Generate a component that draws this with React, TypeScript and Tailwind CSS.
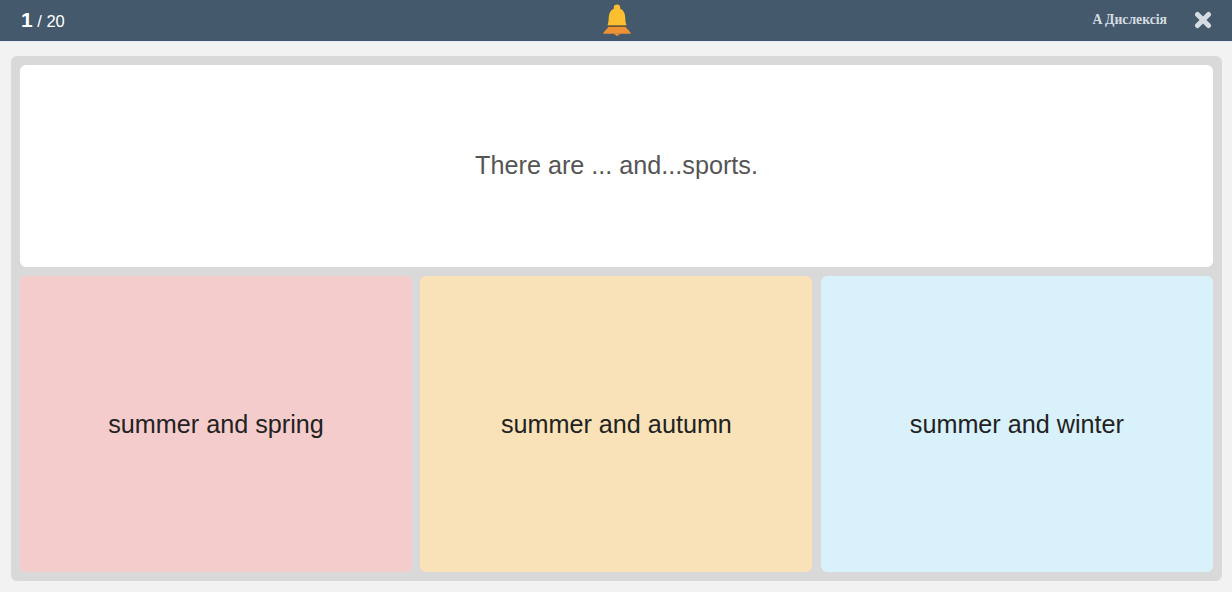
import React from "react";

const answers = [
  { id: 1, text: "summer and spring", color: "bg-[#f5cccc]" },
  { id: 2, text: "summer and autumn", color: "bg-[#f9e2b8]" },
  { id: 3, text: "summer and winter", color: "bg-[#d9f1fb]" },
];

const Bell = () => (
  <svg width="28" height="34" viewBox="0 0 28 34" className="block">
    {/* bell body */}
    <path
      d="M14 1.500c-2 0-3.200 1.200-3.200 2.800v1.400C7.500 7.200 6 10 5.800 14c-.1 3.500-.5 6-1.300 8.500h19c-.8-2.500-1.200-5-1.300-8.500-.2-4-1.700-6.800-5-8.300V4.300c0-1.600-1.200-2.800-3.200-2.800z"
      fill="#fbbf2f"
    />
    <rect x="5" y="22.500" width="18" height="1.500" fill="#6f5a2a" />
    {/* base */}
    <path
      d="M5.500 24h17l5 5.500c.5.800 0 1.300-.8 1.300H1.300c-.8 0-1.300-.5-.8-1.300z"
      fill="#ee9135"
    />
    <path d="M10.500 30.800h7L14 33z" fill="#ee9135" />
  </svg>
);

const CloseIcon = () => (
  <svg width="18" height="18" viewBox="0 0 18 18" className="block">
    <path
      d="M3.500 3.500l11 11M14.500 3.500l-11 11"
      stroke="#d5dce1"
      strokeWidth="5"
      strokeLinecap="round"
    />
  </svg>
);

const App = () => {
  return (
    <div className="min-h-[592px] bg-[#f2f2f2] font-['Liberation_Sans',Arial,sans-serif]">
      {/* top bar */}
      <div className="grid h-[41px] grid-cols-[1fr_auto_1fr] items-center border-b border-[#3f5569] bg-[#44596c] pl-[21px] pr-[20px] shadow-[0_1px_0_#e6ecf3]">
        <div className="text-white">
          <span className="text-[21px] font-bold">1</span>
          <span className="text-[16.500px]"> / 20</span>
        </div>
        <Bell />
        <div className="flex items-center justify-end gap-[27px] text-[#d5dce1]">
          <span className="font-['Liberation_Serif',serif] text-[13.700px] font-bold">
            A Дислексія
          </span>
          <CloseIcon />
        </div>
      </div>
      {/* quiz panel */}
      <div className="px-[10px] pt-[15px] pl-[11px]">
        <div className="flex flex-col gap-[9px] rounded-md bg-[#d9d9d9] p-[9px]">
          <div className="flex h-[202px] items-center justify-center rounded-md bg-white text-[25.200px] text-[#555555]">
            There are ... and...sports.
          </div>
          <div className="grid h-[296px] grid-cols-[392px_392px_1fr] gap-[8.400px]">
            {answers.map((item) => (
              <div
                className={`flex items-center justify-center rounded-md pt-0.5 text-[25.200px] text-[#222222] ${item.color}`}
                key={item.id}
              >
                {item.text}
              </div>
            ))}
          </div>
        </div>
      </div>
    </div>
  );
};

export default App;
